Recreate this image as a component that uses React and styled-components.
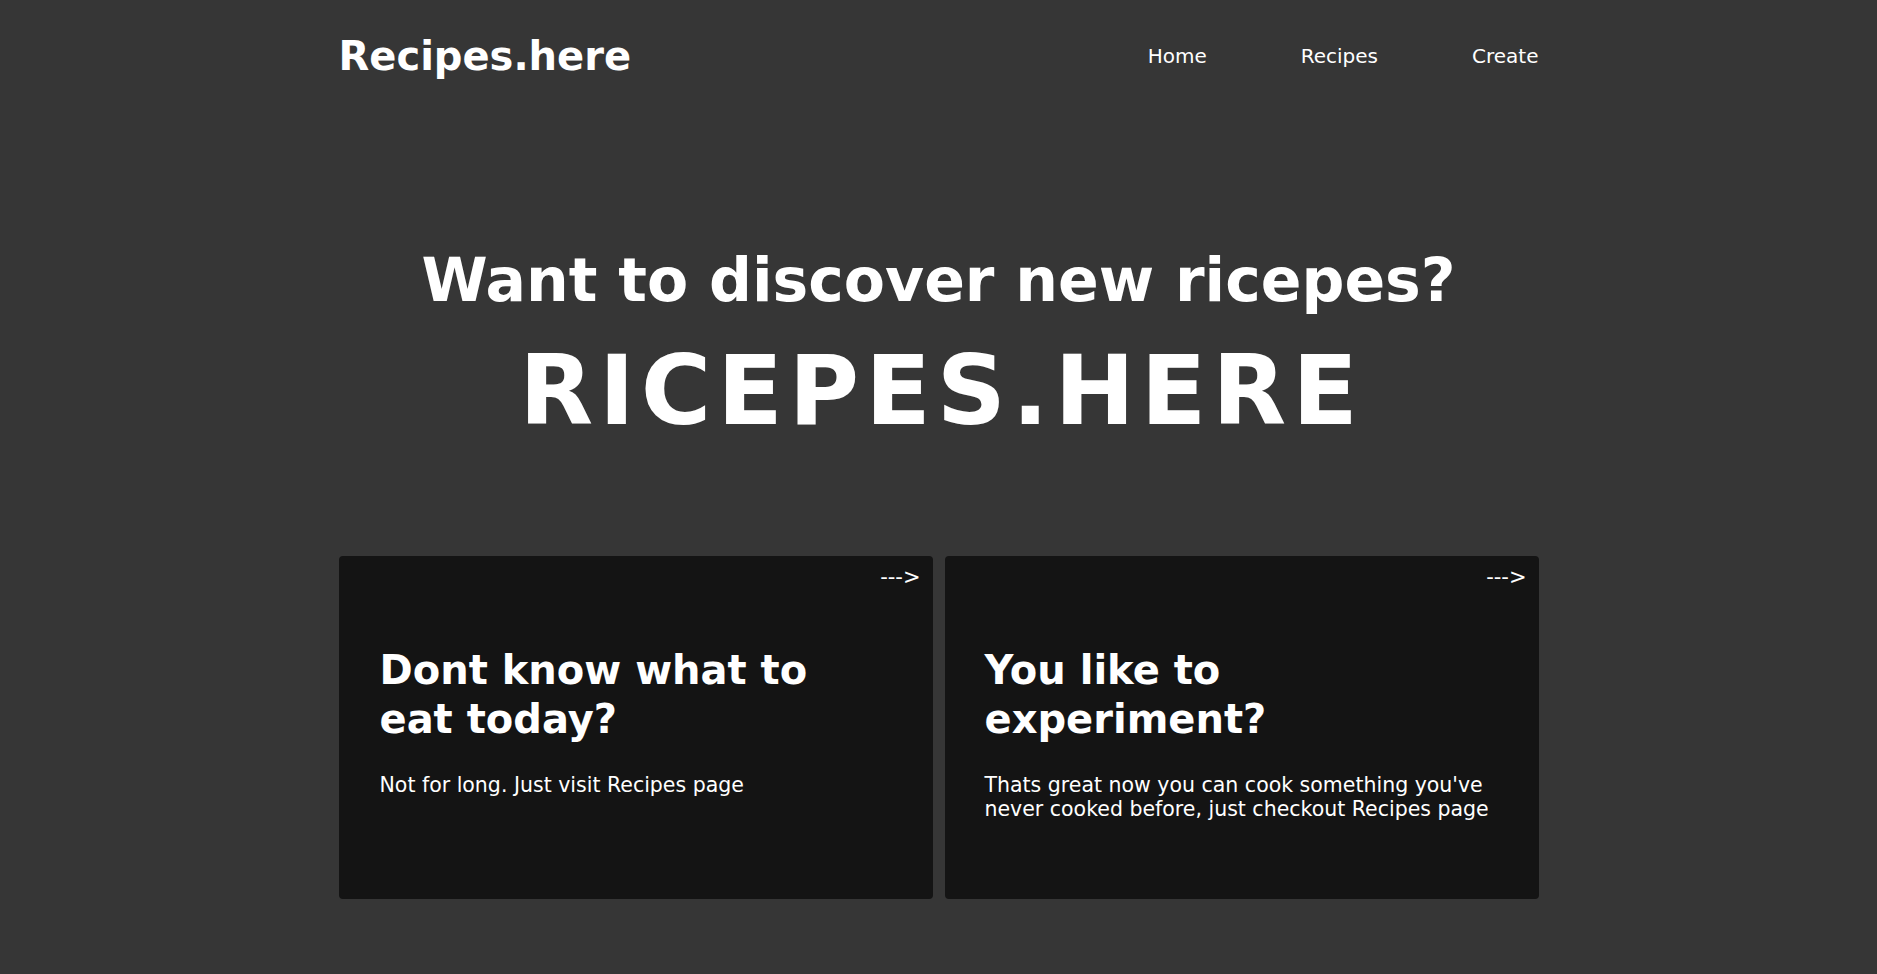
import React from "react";
import styled, { createGlobalStyle } from "styled-components";

const GlobalStyle = createGlobalStyle`
  html, body {
    margin: 0;
    padding: 0;
    background: #363636;
    color: #ffffff;
    font-family: "DejaVu Sans", Verdana, sans-serif;
  }
  * { box-sizing: border-box; }
`;

const Page = styled.div`
  width: 1200px;
  margin: 0 auto;
`;

const Header = styled.header`
  display: flex;
  align-items: center;
  justify-content: space-between;
  padding: 32px 0 34px;
`;

const Logo = styled.a`
  font-size: 40px;
  line-height: 48px;
  font-weight: 700;
  color: #ffffff;
  text-decoration: none;
`;

const Nav = styled.nav`
  display: flex;
  gap: 94px;
`;

const NavLink = styled.a`
  font-size: 20px;
  line-height: 24px;
  color: #ffffff;
  text-decoration: none;
`;

const Hero = styled.section`
  padding: 131px 0 110px;
  text-align: center;
`;

const Lead = styled.h1`
  margin: 0;
  font-size: 60px;
  line-height: 71px;
  font-weight: 700;
`;

const Brand = styled.h2`
  margin: 20px 0 0;
  font-size: 96px;
  line-height: 110px;
  font-weight: 700;
  letter-spacing: 6px;
  padding-left: 6px;
`;

const Cards = styled.section`
  display: grid;
  grid-template-columns: 1fr 1fr;
  gap: 12px;
`;

const Card = styled.article`
  height: 343px;
  background: #141414;
  border-radius: 4px;
  display: flex;
  flex-direction: column;
`;

const CardTop = styled.div`
  display: flex;
  justify-content: flex-end;
  padding: 9px 12px 0;
  font-size: 21px;
  line-height: 25px;
`;

const CardBody = styled.div`
  padding: 56px 40px 0 ${(p) => p.$left}px;
`;

const CardTitle = styled.h3`
  margin: 0;
  max-width: 470px;
  font-size: 40px;
  line-height: 49px;
  font-weight: 700;
`;

const CardText = styled.p`
  margin: 29px 0 0;
  font-size: 20.5px;
  line-height: 24px;
`;

const cards = [
  {
    title: "Dont know what to eat today?",
    text: "Not for long. Just visit Recipes page",
    left: 41,
  },
  {
    title: "You like to experiment?",
    text: "Thats great now you can cook something you've never cooked before, just checkout Recipes page",
    left: 40,
  },
];

export default function App() {
  return (
    <>
      <GlobalStyle />
      <Page>
        <Header>
          <Logo href="#">Recipes.here</Logo>
          <Nav>
            <NavLink href="#">Home</NavLink>
            <NavLink href="#">Recipes</NavLink>
            <NavLink href="#">Create</NavLink>
          </Nav>
        </Header>
        <Hero>
          <Lead>Want to discover new ricepes?</Lead>
          <Brand>RICEPES.HERE</Brand>
        </Hero>
        <Cards>
          {cards.map((c) => (
            <Card key={c.title}>
              <CardTop>---&gt;</CardTop>
              <CardBody $left={c.left}>
                <CardTitle>{c.title}</CardTitle>
                <CardText>{c.text}</CardText>
              </CardBody>
            </Card>
          ))}
        </Cards>
      </Page>
    </>
  );
}
